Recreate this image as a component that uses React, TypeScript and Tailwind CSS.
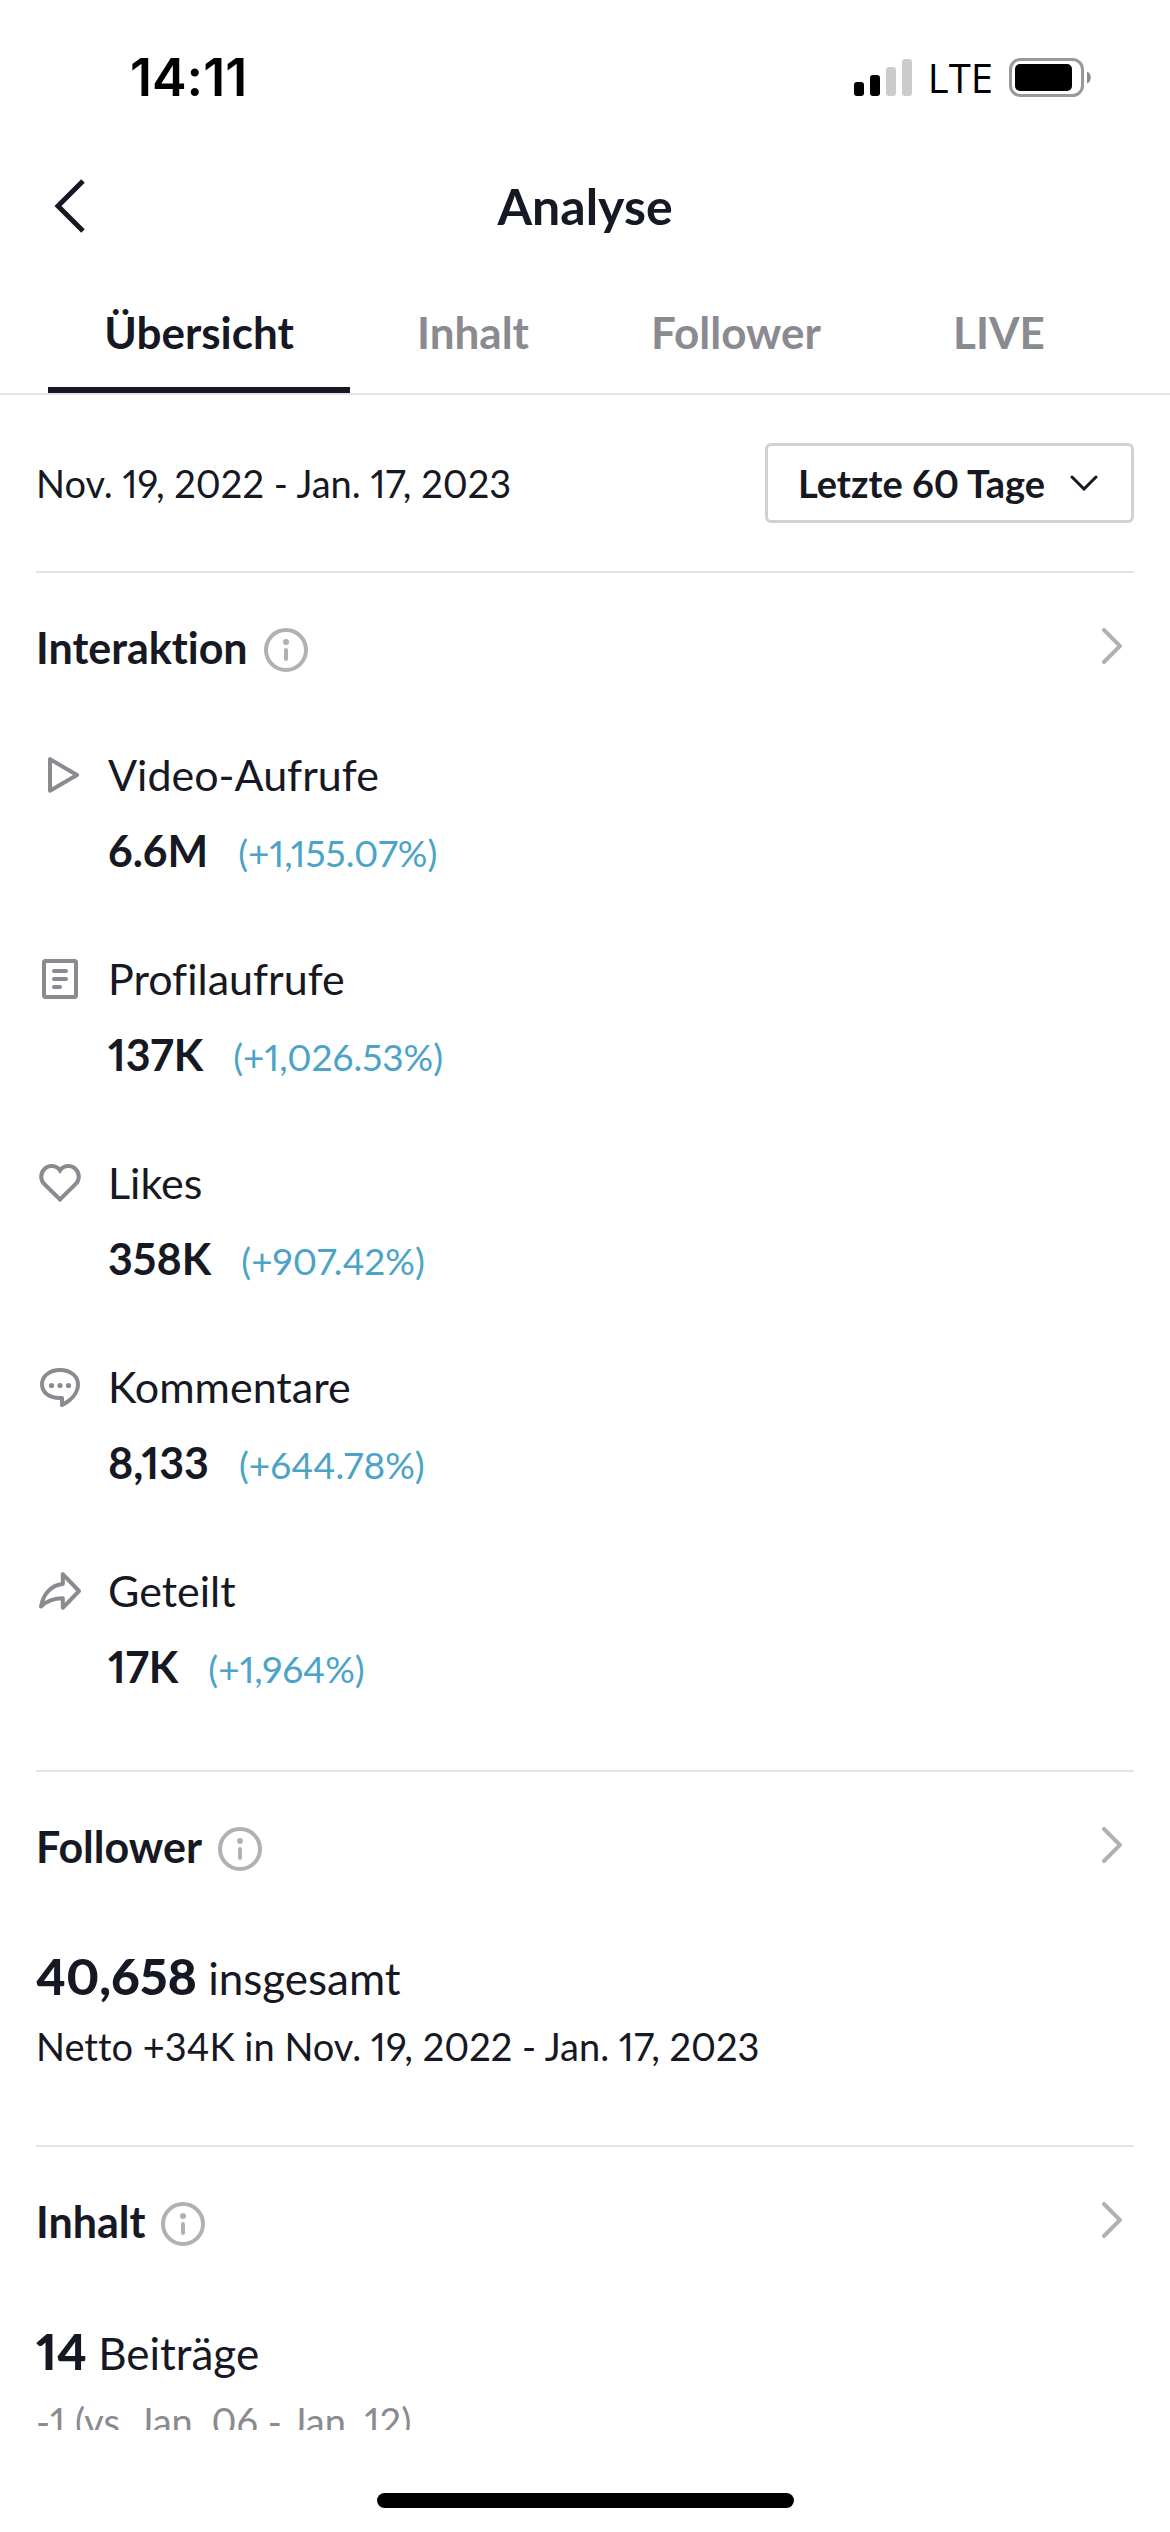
import { useState } from 'react';
import type { ReactNode } from 'react';

interface Metric {
  id: string;
  label: string;
  value: string;
  change: string;
  icon: ReactNode;
}

const tabs = ['Übersicht', 'Inhalt', 'Follower', 'LIVE'];

const ranges = ['Letzte 7 Tage', 'Letzte 28 Tage', 'Letzte 60 Tage'];

const MetricIcon = ({ children }: { children: ReactNode }) => (
  <svg
    viewBox="0 0 48 48"
    className="size-12 shrink-0"
    fill="none"
    stroke="#8a8b91"
    strokeWidth="4"
    strokeLinecap="round"
    strokeLinejoin="round"
    aria-hidden="true"
  >
    {children}
  </svg>
);

const metrics: Metric[] = [
  {
    id: 'views',
    label: 'Video-Aufrufe',
    value: '6.6M',
    change: '(+1,155.07%)',
    icon: (
      <MetricIcon>
        <path d="M14 8.2v31.6L41 24z" />
      </MetricIcon>
    ),
  },
  {
    id: 'profile',
    label: 'Profilaufrufe',
    value: '137K',
    change: '(+1,026.53%)',
    icon: (
      <MetricIcon>
        <rect x="8" y="6" width="32" height="36" rx="1.5" />
        <path d="M18 16h12M18 24h12M18 32h6" />
      </MetricIcon>
    ),
  },
  {
    id: 'likes',
    label: 'Likes',
    value: '358K',
    change: '(+907.42%)',
    icon: (
      <MetricIcon>
        <path
          strokeLinejoin="miter"
          d="M24 11.5C20 6 12.5 5.8 8.5 10C4 14.5 4.2 21 8.5 25.2L24 40.5L39.5 25.2C43.8 21 44 14.5 39.5 10C35.5 5.8 28 6 24 11.5Z"
        />
      </MetricIcon>
    ),
  },
  {
    id: 'comments',
    label: 'Kommentare',
    value: '8,133',
    change: '(+644.78%)',
    icon: (
      <MetricIcon>
        <path d="M26 35C14 35.8 6 30 6 21.3C6 12.8 14 7 24 7S42 12.8 42 21.3C42 30 35 37.5 26 42Z" />
        <g fill="#8a8b91" stroke="none">
          <circle cx="15.5" cy="22.5" r="2.6" />
          <circle cx="24" cy="22.5" r="2.6" />
          <circle cx="32.5" cy="22.5" r="2.6" />
        </g>
      </MetricIcon>
    ),
  },
  {
    id: 'shares',
    label: 'Geteilt',
    value: '17K',
    change: '(+1,964%)',
    icon: (
      <MetricIcon>
        <path d="M26.8 7.2V17C15 18 7 27.5 5 39.5C11 33.5 18 31.2 26.8 31.2V40.8L43 24Z" />
      </MetricIcon>
    ),
  },
];

const StatusBar = () => (
  <div className="flex h-[132px] shrink-0 items-center justify-between pt-6 pr-[78px] pl-[130px] font-[Inter,sans-serif] text-black">
    <span className="text-[52px] leading-[60px] font-semibold">14:11</span>
    <div className="flex items-center gap-4">
      <svg viewBox="0 0 58 38" className="h-[38px] w-[58px]" aria-hidden="true">
        <rect x="0" y="23" width="10" height="14" rx="3" />
        <rect x="16" y="16" width="10" height="21" rx="3" />
        <rect x="32" y="8" width="10" height="29" rx="3" fill="#cccccc" />
        <rect x="48" y="0" width="10" height="37" rx="3" fill="#cccccc" />
      </svg>
      <span className="font-['Open_Sans',sans-serif] text-[40px] leading-[48px] font-medium">LTE</span>
      <svg viewBox="0 0 83 40" className="h-10 w-[83px]" aria-hidden="true">
        <rect x="1.5" y="1.5" width="72" height="36" rx="10" fill="none" stroke="#999999" strokeWidth="3" />
        <rect x="6" y="6" width="57" height="27" rx="5" />
        <path d="M78 13.5c5 1.5 5 10.5 0 12z" fill="#8c8c8c" />
      </svg>
    </div>
  </div>
);

const InfoButton = ({ title }: { title: string }) => (
  <button type="button" aria-label={`Info: ${title}`} className="mt-1">
    <svg viewBox="0 0 44 44" className="size-11" fill="none" stroke="#b0b1b5" strokeWidth="4" aria-hidden="true">
      <circle cx="22" cy="22" r="20" />
      <path d="M22 22v9" strokeLinecap="round" />
      <circle cx="22" cy="14" r="3" fill="#b0b1b5" stroke="none" />
    </svg>
  </button>
);

const Section = ({ title, children }: { title: string; children: ReactNode }) => (
  <section className="border-t-2 border-[#e3e3e5] pb-[75px]">
    <div className="flex h-[150px] items-center gap-4">
      <h2 className="text-[43px] leading-[48px] font-bold">{title}</h2>
      <InfoButton title={title} />
      <button type="button" aria-label={`${title} öffnen`} className="mr-3 mb-1 ml-auto">
        <svg
          viewBox="0 0 20 36"
          className="h-9 w-5"
          fill="none"
          stroke="#b0b1b5"
          strokeWidth="4"
          strokeLinecap="round"
          aria-hidden="true"
        >
          <path d="M2 2l16 16L2 34" />
        </svg>
      </button>
    </div>
    {children}
  </section>
);

const Total = ({ value, unit }: { value: string; unit: string }) => (
  <p className="h-[60px] text-[44px] leading-[60px]">
    <strong className="text-[50px] font-black">{value}</strong> {unit}
  </p>
);

export default function App() {
  const [activeTab, setActiveTab] = useState('Übersicht');
  const [range, setRange] = useState('Letzte 60 Tage');

  return (
    <div className="flex h-screen flex-col bg-white font-[Lato,sans-serif] text-[#161823] proportional-nums [font-variant-ligatures:none]">
      <StatusBar />

      {/* Header */}
      <header className="grid h-36 shrink-0 grid-cols-[1fr_auto_1fr] items-center px-[54px] pt-1">
        <button type="button" aria-label="Zurück" className="justify-self-start">
          <svg
            viewBox="0 0 32 54"
            className="h-[54px] w-8"
            fill="none"
            stroke="#161823"
            strokeWidth="5"
            aria-hidden="true"
          >
            <path d="M29 2L4 27l25 25" />
          </svg>
        </button>
        <h1 className="text-[50px] leading-[60px] font-bold">Analyse</h1>
      </header>

      {/* Tabs */}
      <nav className="grid shrink-0 grid-cols-[302fr_246fr_280fr_246fr] border-b-2 border-[#e3e3e5] px-12">
        {tabs.map((tab) => (
          <button
            key={tab}
            type="button"
            onClick={() => setActiveTab(tab)}
            className={`h-[117px] border-b-6 text-[44px] font-bold ${
              tab === activeTab ? 'border-[#161823]' : 'border-transparent text-[#8a8b91]'
            }`}
          >
            {tab}
          </button>
        ))}
      </nav>

      <main className="min-h-0 flex-1 overflow-hidden px-9">
        {/* Date range */}
        <div className="flex items-center justify-between py-12">
          <span className="text-[38px] leading-[48px]">Nov. 19, 2022 - Jan. 17, 2023</span>
          <div className="relative">
            <select
              aria-label="Zeitraum"
              value={range}
              onChange={(e) => setRange(e.target.value)}
              className="h-20 appearance-none rounded-md border-3 border-[#d0d1d3] bg-white pr-[84px] pl-[30px] text-[38px] font-bold"
            >
              {ranges.map((item) => (
                <option key={item}>{item}</option>
              ))}
            </select>
            <svg
              viewBox="0 0 28 16"
              className="pointer-events-none absolute top-8 right-9 h-4 w-7"
              fill="none"
              stroke="#161823"
              strokeWidth="3"
              strokeLinecap="round"
              aria-hidden="true"
            >
              <path d="M2 2l12 12L26 2" />
            </svg>
          </div>
        </div>

        <Section title="Interaktion">
          <ul className="flex flex-col gap-20 pt-7 pb-1">
            {metrics.map((metric) => (
              <li key={metric.id} className="flex gap-6">
                {metric.icon}
                <div className="flex flex-col gap-7">
                  <span className="text-[43px] leading-[48px]">{metric.label}</span>
                  <div className="flex h-12 items-baseline gap-[30px] leading-[48px]">
                    <span className="text-[43px] font-bold">{metric.value}</span>
                    <span className="text-[37px] text-[#4ba3c7]">{metric.change}</span>
                  </div>
                </div>
              </li>
            ))}
          </ul>
        </Section>

        <Section title="Follower">
          <div className="flex flex-col gap-4 pt-6">
            <Total value="40,658" unit="insgesamt" />
            <p className="text-[38px] leading-[48px]">Netto +34K in Nov. 19, 2022 - Jan. 17, 2023</p>
          </div>
        </Section>

        <Section title="Inhalt">
          <div className="flex flex-col gap-4 pt-6">
            <Total value="14" unit="Beiträge" />
            <p className="text-[38px] leading-[48px] text-[#8a8b91]">-1 (vs. Jan. 06 - Jan. 12)</p>
          </div>
        </Section>
      </main>

      {/* Home indicator */}
      <footer className="flex h-[102px] shrink-0 items-end justify-center pb-6">
        <div className="h-[15px] w-[417px] rounded-full bg-black" />
      </footer>
    </div>
  );
}
